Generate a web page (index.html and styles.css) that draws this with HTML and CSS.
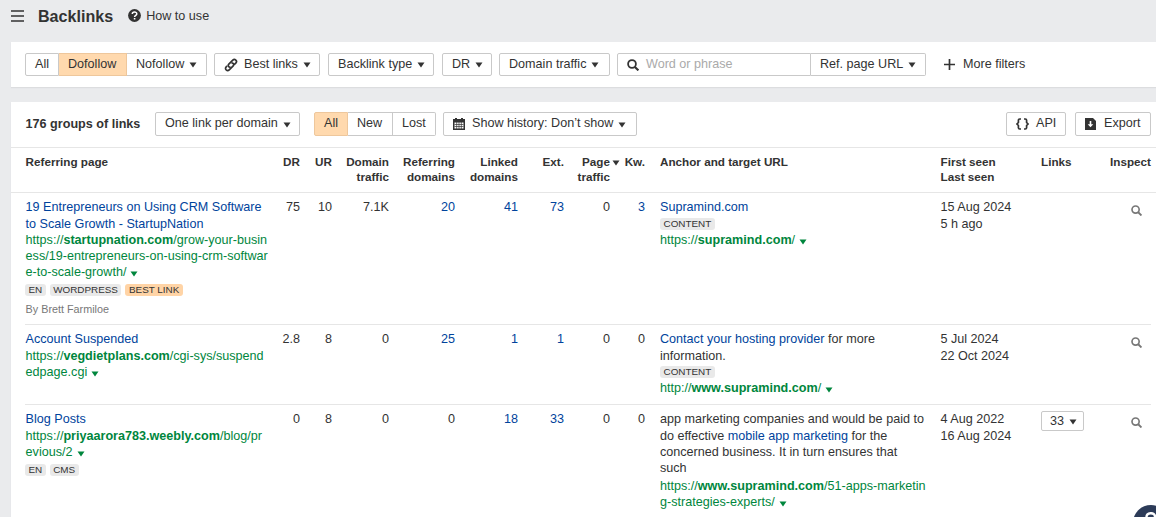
FILE: index.html
```html
<!DOCTYPE html>
<html lang="en">
<head>
<meta charset="utf-8">
<title>Backlinks</title>
<link rel="stylesheet" href="styles.css">
</head>
<body>
<svg class="defs" width="0" height="0">
  <symbol id="caret" viewBox="0 0 8 6"><path d="M.5.5h7L4 5.5z" fill="currentColor"/></symbol>
  <symbol id="search" viewBox="0 0 12 12"><circle cx="5" cy="5" r="3.9" fill="none" stroke="currentColor" stroke-width="1.8"/><path d="M7.9 7.9l3.5 3.5" stroke="currentColor" stroke-width="2.1"/></symbol>
</svg>
<header class="page-head">
  <svg class="menu" width="13" height="12" viewBox="0 0 13 12"><path d="M0 1h13M0 6h13M0 11h13" stroke="#333" stroke-width="1.6"/></svg>
  <h1>Backlinks</h1>
  <a class="howto"><svg width="13" height="13" viewBox="0 0 13 13"><circle cx="6.5" cy="6.5" r="6.4" fill="#333"/><path d="M4.3 5C4.3 2.4 8.8 2.4 8.8 4.9C8.8 6.3 6.6 6.3 6.6 8" fill="none" stroke="#fff" stroke-width="1.5"/><path d="M5.8 9h1.6v1.5H5.8z" fill="#fff"/></svg>How to use</a>
</header>

<section class="card filters">
  <div class="group">
    <button class="btn w34">All</button><button class="btn w68 on">Dofollow</button><button class="btn w80">Nofollow<svg class="caret"><use href="#caret"/></svg></button>
  </div>
  <button class="btn best"><svg class="link" width="14" height="14" viewBox="0 0 14 14"><g fill="none" stroke="#333" stroke-width="1.7" stroke-linecap="round"><path d="M6 9.2L4.8 8.7C4 7.8 4.1 6.9 4.8 6.2L8.8 2.2C9.7 1.3 10.9 1.3 11.8 2.1C12.7 3 12.7 4.2 11.8 5.1L10.7 6.2"/><path d="M8.1 4.9L9.2 5.4C10 6.2 9.9 7.1 9.2 7.8L5.2 11.8C4.3 12.7 3.1 12.7 2.2 11.9C1.3 11 1.3 9.8 2.2 8.9L2.6 8.4"/></g></svg>Best links<svg class="caret"><use href="#caret"/></svg></button>
  <button class="btn type">Backlink type<svg class="caret"><use href="#caret"/></svg></button>
  <button class="btn dr">DR<svg class="caret"><use href="#caret"/></svg></button>
  <button class="btn traffic">Domain traffic<svg class="caret"><use href="#caret"/></svg></button>
  <div class="group">
    <div class="btn field"><svg class="ico12"><use href="#search"/></svg><span>Word or phrase</span></div><button class="btn ref">Ref. page URL<svg class="caret"><use href="#caret"/></svg></button>
  </div>
  <a class="more"><svg width="11" height="11" viewBox="0 0 11 11"><path d="M0 5.5h11M5.5 0v11" stroke="#333" stroke-width="1.7"/></svg>More filters</a>
</section>

<main class="card results">
  <div class="toolbar">
    <strong class="count">176 groups of links</strong>
    <button class="btn perdomain">One link per domain<svg class="caret"><use href="#caret"/></svg></button>
    <div class="group states">
      <button class="btn w34 on">All</button><button class="btn w45">New</button><button class="btn w43">Lost</button>
    </div>
    <button class="btn history"><svg class="cal" width="12" height="12" viewBox="0 0 12 12"><path d="M0 1h2V0h2v1h4V0h2v1h2v11H0z" fill="#333"/><path d="M1.5 4.5h9v6h-9z" fill="#fff"/><path d="M1.5 6.5h9M1.5 8.5h9M3.7 4v7M6 4v7M8.3 4v7" stroke="#333" stroke-width=".7"/></svg>Show history: Don’t show<svg class="caret"><use href="#caret"/></svg></button>
    <button class="btn api"><svg width="13" height="12" viewBox="0 0 13 12"><path d="M5 1H3.7Q2.4 1 2.4 2.3V4.5L1 6L2.4 7.5V9.7Q2.4 11 3.7 11H5M8 1h1.3q1.3 0 1.3 1.3v2.2L12 6L10.6 7.5V9.7Q10.6 11 9.3 11H8" fill="none" stroke="#333" stroke-width="1.7"/></svg>API</button>
    <button class="btn export"><svg width="11" height="12" viewBox="0 0 11 12"><path d="M0 0h8l3 3v9H0z" fill="#333"/><path d="M4.7 3h1.6v3.3h2L5.5 9.3L2.7 6.3h2z" fill="#fff"/></svg>Export</button>
  </div>

  <div class="row thead">
    <div>Referring page</div>
    <div class="num">DR</div><div class="num">UR</div><div class="num">Domain<br>traffic</div><div class="num">Referring<br>domains</div><div class="num">Linked<br>domains</div><div class="num">Ext.</div>
    <div class="num sorted">Page<br>traffic<svg class="caret"><use href="#caret"/></svg></div><div class="num">Kw.</div>
    <div class="anchor">Anchor and target URL</div><div>First seen<br>Last seen</div><div>Links</div><div class="num">Inspect</div>
  </div>

  <div class="table">
    <div class="row r1">
      <div><a>19 Entrepreneurs on Using CRM Software<br>to Scale Growth - StartupNation</a>
        <div class="url">https://<b>startupnation.com</b>/grow-your-busin<br>ess/19-entrepreneurs-on-using-crm-softwar<br>e-to-scale-growth/<svg class="caret"><use href="#caret"/></svg></div>
        <div class="tags"><span>EN</span><span>WORDPRESS</span><span class="best-tag">BEST LINK</span></div>
        <div class="by">By Brett Farmiloe</div></div>
      <div class="num">75</div><div class="num">10</div><div class="num">7.1K</div><div class="num"><a>20</a></div><div class="num"><a>41</a></div><div class="num"><a>73</a></div><div class="num">0</div><div class="num"><a>3</a></div>
      <div class="anchor"><a>Supramind.com</a><div class="tags inner"><span>CONTENT</span></div><div class="url">https://<b>supramind.com</b>/<svg class="caret"><use href="#caret"/></svg></div></div>
      <div>15 Aug 2024<br>5 h ago</div><div></div><div class="inspect"><svg class="ico12"><use href="#search"/></svg></div>
    </div>
    <div class="row r2">
      <div><a>Account Suspended</a>
        <div class="url">https://<b>vegdietplans.com</b>/cgi-sys/suspend<br>edpage.cgi<svg class="caret"><use href="#caret"/></svg></div></div>
      <div class="num">2.8</div><div class="num">8</div><div class="num">0</div><div class="num"><a>25</a></div><div class="num"><a>1</a></div><div class="num"><a>1</a></div><div class="num">0</div><div class="num">0</div>
      <div class="anchor"><a>Contact your hosting provider</a> for more<br>information.<div class="tags inner"><span>CONTENT</span></div><div class="url">http://<b>www.supramind.com</b>/<svg class="caret"><use href="#caret"/></svg></div></div>
      <div>5 Jul 2024<br>22 Oct 2024</div><div></div><div class="inspect"><svg class="ico12"><use href="#search"/></svg></div>
    </div>
    <div class="row r3">
      <div><a>Blog Posts</a>
        <div class="url">https://<b>priyaarora783.weebly.com</b>/blog/pr<br>evious/2<svg class="caret"><use href="#caret"/></svg></div>
        <div class="tags"><span>EN</span><span>CMS</span></div></div>
      <div class="num">0</div><div class="num">8</div><div class="num">0</div><div class="num">0</div><div class="num"><a>18</a></div><div class="num"><a>33</a></div><div class="num">0</div><div class="num">0</div>
      <div class="anchor">app marketing companies and would be paid to<br>do effective <a>mobile app marketing</a> for the<br>concerned business. It in turn ensures that<br>such<div class="url spaced">https://<b>www.supramind.com</b>/51-apps-marketin<br>g-strategies-experts/<svg class="caret"><use href="#caret"/></svg></div></div>
      <div>4 Aug 2022<br>16 Aug 2024</div><div><button class="btn small">33<svg class="caret"><use href="#caret"/></svg></button></div><div class="inspect"><svg class="ico12"><use href="#search"/></svg></div>
    </div>
  </div>
</main>
<div class="help"><svg width="12" height="12" viewBox="0 0 12 12"><path d="M1.5 5C1.5 0 10 0 10 4.5C10 7 6 7 6 10" fill="none" stroke="#fff" stroke-width="2.4"/></svg></div>
</body>
</html>
```

FILE: styles.css
```css
* { box-sizing: border-box; }
body {
  margin: 0;
  height: 517px;
  overflow: hidden;
  background: #eaebed;
  color: #333;
  font: 12.6px/16.2px "Liberation Sans", Arial, sans-serif;
  white-space: nowrap;
}
.defs { display: block; }
svg { flex: none; }
.page-head { display: flex; align-items: center; height: 42px; padding: 0 0 10px 11px; }
h1 { margin: 0 0 0 14px; font-size: 16.1px; line-height: 20px; }
.howto { display: flex; align-items: center; gap: 5px; margin-left: 15px; }
.card { margin-left: 11px; background: #fff; box-shadow: 0 1px 1px #dcdddf; }
.filters { display: flex; height: 45px; padding: 11px 0 0 14px; }
.btn {
  display: flex;
  align-items: center;
  height: 23px;
  margin: 0;
  padding: 0 0 1px 9px;
  border: 1px solid #c9c9c9;
  border-radius: 2px;
  background: #fff;
  color: #333;
  font: inherit;
  text-align: left;
}
.group { display: flex; }
.group .btn { border-radius: 0; }
.group .btn + .btn { border-left: 0; }
.group .btn:first-child { border-radius: 2px 0 0 2px; }
.group .btn:last-child { border-radius: 0 2px 2px 0; }
.btn.on { background: #ffd9ae; border-color: #eec79c; }
.caret { width: 8px; height: 6px; margin: 2px 0 0 5px; }
.ico12 { width: 12px; height: 12px; }
.w34 { width: 34px; }
.w68 { width: 68px; }
.w80 { width: 80px; }
.w45 { width: 45px; }
.w43 { width: 43px; }
.best { width: 106px; margin-left: 7px; }
.best .link { margin: 1px 6px 0 0; }
.type { width: 106px; margin-left: 8px; }
.dr { width: 50px; margin-left: 8px; }
.traffic { width: 111px; margin: 0 7px; }
.field { width: 194px; color: #aaa; }
.field svg { margin: 1px 7px 0 0; color: #333; }
.ref { width: 115px; }
.more { display: flex; align-items: center; gap: 8px; height: 22px; margin-left: 18px; }
.more svg { margin-top: 1px; }

.results { height: 430px; margin-top: 15px; }
.toolbar { display: flex; height: 46px; padding: 10px 5px 0 14px; border-bottom: 1px solid #e6e6e6; }
.toolbar .btn { height: 24px; }
.count { width: 130px; padding-left: .6px; line-height: 24px; }
.perdomain { width: 145px; }
.states { margin: 0 7px 0 14px; }
.history { width: 194px; }
.cal { margin: 1px 7px 0 0; }
.api { width: 60px; margin-left: auto; gap: 7px; }
.export { width: 76px; margin-left: 9px; gap: 8px; }
.api svg, .export svg { margin-top: 1px; }

.row {
  display: grid;
  grid-template-columns: 244px 31px 32px 57px 66px 63px 46px 46px 35px 295px 101px 1fr 50px;
}
.row > div:first-child { padding-left: .6px; }
.thead {
  height: 45px;
  padding: 7.4px 5px 0 14px;
  border-bottom: 1px solid #e6e6e6;
  font-size: 11.7px;
  font-weight: bold;
  line-height: 14.4px;
}
.num { text-align: right; }
.sorted { position: relative; }
.sorted .caret { position: absolute; top: 5px; right: -10px; margin: 0; }
.anchor { padding-left: 15px; }
.row > .anchor + div { padding-left: .5px; }
.table { margin: 0 5px 0 14px; }
.table .row { padding-top: 6.3px; border-bottom: 1px solid #e6e6e6; }
.table .r1 { height: 132px; }
.table .r2 { height: 80px; }
.table .r3 { height: 112px; border: 0; }
a { color: #00439c; }
.howto, .more { color: #333; }
.url { color: #00863d; }
.url .caret { margin: 0 0 -1px 4px; }
.spaced { margin-top: 2px; }
.tags { display: flex; gap: 4px; height: 17px; margin-left: -.6px; padding-top: 3.7px; }
.tags span {
  height: 12px;
  padding: 0 3.5px;
  border-radius: 3px;
  background: #e9e9e9;
  color: #333;
  font-size: 9.9px;
  line-height: 11px;
}
.tags .best-tag { background: #ffd4a6; }
.tags.inner { height: 16px; margin-left: 0; padding-top: 2.7px; }
.by { margin-top: 5px; color: #777; font-size: 10.8px; line-height: 14px; }
.inspect { padding: 5.7px 0 0 30px; color: #777; }
.inspect svg { display: block; width: 11px; height: 11px; }
.small { width: 43px; height: 20px; padding-left: 8px; }
.help {
  position: absolute;
  left: 1133px;
  top: 505px;
  width: 36px;
  height: 36px;
  padding: 7px 12px;
  border-radius: 50%;
  background: #2c3b58;
  clip-path: inset(0 13px 24px 0);
}
```
